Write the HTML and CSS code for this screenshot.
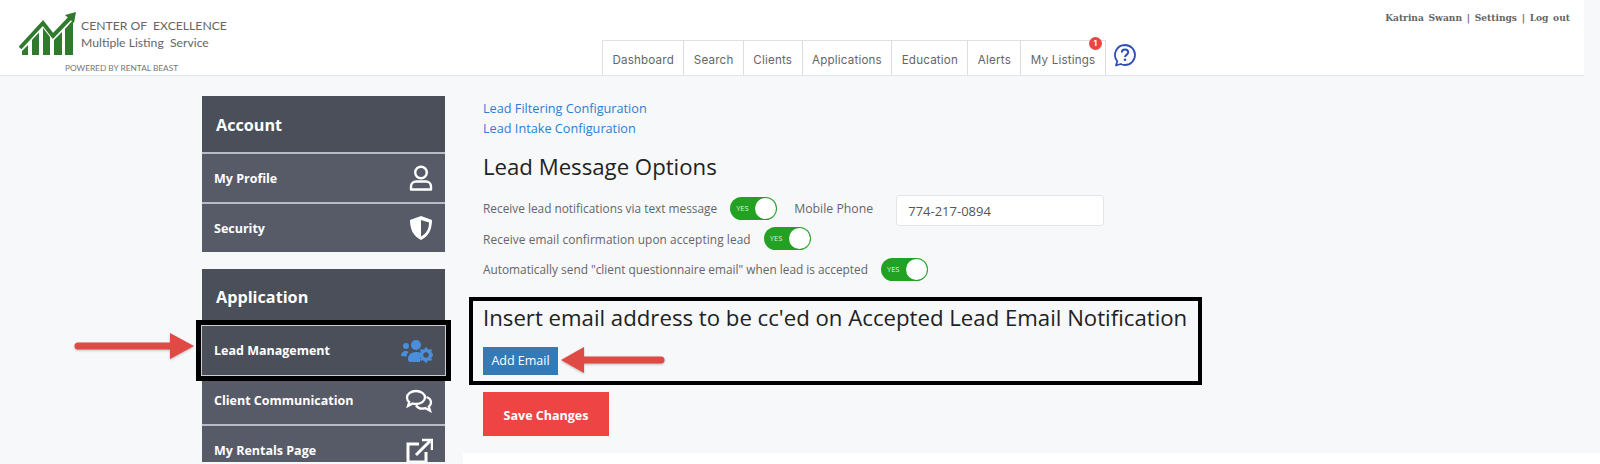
FILE: index.html
```html
<!DOCTYPE html>
<html lang="en">
<head>
  <meta charset="UTF-8">
  <meta name="viewport" content="width=device-width, initial-scale=1.0">
  <title>Lead Management</title>
  <link rel="stylesheet" href="styles.css">
</head>
<body>
  <header class="topbar">
    <div class="brand">
      <svg class="brand-logo" viewBox="0 0 58 44" width="58" height="44">
        <path d="M3 43V39L9 33V43Z M13 43V28L20 20.500V43Z M24 43V16L31 25V43Z M35 43V28L43 20V43Z M46 43V17L54 8V43Z" fill="#2f7a2c"/>
        <path d="M1 36L24 11L34 24L53 4" fill="none" stroke="#2f7a2c" stroke-width="4"/>
        <path d="M46 3L57 0L55 11Z" fill="#2f7a2c"/>
      </svg>
      <div class="brand-text">
        <div class="brand-name">CENTER OF&nbsp; EXCELLENCE</div>
        <div class="brand-sub">Multiple Listing&nbsp; Service</div>
        <div class="brand-power">POWERED BY RENTAL BEAST</div>
      </div>
    </div>

    <nav class="tabs">
      <a href="#">Dashboard</a>
      <a href="#">Search</a>
      <a href="#">Clients</a>
      <a href="#">Applications</a>
      <a href="#">Education</a>
      <a href="#">Alerts</a>
      <a href="#" class="tab-badge">My Listings<span class="badge">1</span></a>
    </nav>
    <svg class="help" viewBox="0 0 24 24" width="24" height="24">
      <path d="M12 2a10 10 0 0 1 0 20c-1.600 0-3-.3-4.300-1L3 22.500l1.300-4.200A10 10 0 0 1 12 2Z" fill="none" stroke="#2f4fb5" stroke-width="1.800" stroke-linejoin="round"/>
      <path d="M8.800 9.500c0-1.900 1.400-3 3.200-3s3.200 1.100 3.200 2.800c0 2.500-3.200 2.500-3.200 4.700" fill="none" stroke="#2f4fb5" stroke-width="2"/>
      <circle cx="12" cy="16.800" r="1.300" fill="#2f4fb5"/>
    </svg>

    <div class="user-links">Katrina Swann | Settings | Log out</div>
  </header>

  <div class="page">
    <aside class="sidebar">
      <section class="side-group">
        <h2>Account</h2>
        <a href="#" class="side-item">My Profile
          <svg viewBox="0 0 24 26" width="24" height="26" fill="none" stroke="#fff" stroke-width="2.400">
            <circle cx="12" cy="7.500" r="5.800"/>
            <path d="M2 24.500V21.500C2 18.500 4.500 16.500 7 16.500H17C19.500 16.500 22 18.500 22 21.500V24.500Z" stroke-linejoin="round"/>
          </svg>
        </a>
        <a href="#" class="side-item">Security
          <svg viewBox="0 0 24 26" width="24" height="26">
            <path d="M12 1L23 5C23 14 20 21 12 25C4 21 1 14 1 5Z" fill="#fff"/>
            <path d="M12 5L20 7.500C20 14 17.500 18.500 12 21.500Z" fill="#565b67"/>
          </svg>
        </a>
      </section>

      <section class="side-group">
        <h2 class="side-head-tight">Application</h2>
        <a href="#" class="side-item side-active">Lead Management
          <svg viewBox="0 0 32 24" width="32" height="24" fill="#4a8fdc">
            <circle cx="5" cy="7" r="3"/>
            <circle cx="15" cy="6" r="5"/>
            <path d="M0 17c0-3 2-5 5-5 1 0 2 .3 2.500 1-1 1-2 3-2 4.500Z"/>
            <path d="M7 20c0-4 3-7 8-7 2 0 3 .4 4 1v9H9c-1 0-2-1-2-3Z"/>
            <circle cx="25" cy="16" r="4.500" fill="none" stroke="#4a8fdc" stroke-width="3.500"/>
            <path d="M25 8.500v3M25 20.500v3M17.500 16h3M29.500 16h3M19.700 10.700l2 2M28.300 19.300l2 2M30.300 10.700l-2 2M21.700 19.300l-2 2" stroke="#4a8fdc" stroke-width="2.500"/>
          </svg>
        </a>
        <a href="#" class="side-item side-after-active">Client Communication
          <svg viewBox="0 0 28 24" width="28" height="24" fill="none" stroke="#fff" stroke-width="2.300">
            <path d="M11 2c5 0 9 3 9 6.500S16 15 11 15c-1.200 0-2.300-.2-3.300-.5L3 17l1.200-4C2.800 12 2 10.300 2 8.500 2 5 6 2 11 2Z"/>
            <path d="M21.500 8c2.700 1 4.500 3 4.500 5.500 0 1.700-.8 3-2.200 4.200l1.200 4-4.500-2.500c-3.500 1-7.500 0-9.500-2.700"/>
          </svg>
        </a>
        <a href="#" class="side-item side-last">My Rentals Page
          <svg viewBox="0 0 28 26" width="28" height="26" fill="none" stroke="#fff" stroke-width="3">
            <path d="M14 6H3V24H21V14"/>
            <path d="M11 17L25 3"/>
            <path d="M17 2H27V12" stroke-width="2.500"/>
          </svg>
        </a>
      </section>
    </aside>

    <div class="content-wrap">
      <main class="content">
        <div class="config-links">
          <a href="#">Lead Filtering Configuration</a>
          <a href="#">Lead Intake Configuration</a>
        </div>

        <h1>Lead Message Options</h1>

        <div class="option">
          <span>Receive lead notifications via text message</span>
          <span class="switch"><small>YES</small></span>
          <span class="phone-label">Mobile Phone</span>
          <input class="phone-input" type="text" value="774-217-0894">
        </div>
        <div class="option option-wide">
          <span>Receive email confirmation upon accepting lead</span>
          <span class="switch"><small>YES</small></span>
        </div>
        <div class="option">
          <span>Automatically send "client questionnaire email" when lead is accepted</span>
          <span class="switch"><small>YES</small></span>
        </div>

        <div class="cc-box">
          <div class="cc-title">Insert email address to be cc'ed on Accepted Lead Email Notification</div>
          <button class="btn-add">Add Email</button>
        </div>

        <button class="btn-save">Save Changes</button>
      </main>
    </div>
  </div>

  <!-- red callout arrows drawn on top of the screenshot -->
  <svg class="arrow arrow-side" viewBox="0 0 122 28" width="122" height="28">
    <path d="M4 14H100" stroke="#e04a45" stroke-width="7" stroke-linecap="round"/>
    <path d="M96 1L120 14L96 27Z" fill="#e04a45"/>
  </svg>
  <svg class="arrow arrow-add" viewBox="0 0 106 28" width="106" height="28">
    <path d="M22 14H101" stroke="#e04a45" stroke-width="7" stroke-linecap="round"/>
    <path d="M24 1L1 14L24 27Z" fill="#e04a45"/>
  </svg>
</body>
</html>
```

FILE: styles.css
```css
html, body {
  margin: 0;
  padding: 0;
}

body {
  position: relative;
  width: 1600px;
  height: 464px;
  overflow: hidden;
  background: #f7f8fa;
  font-family: "Open Sans", sans-serif;
}

.topbar {
  position: relative;
  display: flex;
  align-items: flex-end;
  width: 1584px;
  height: 75px;
  border-bottom: 1px solid #e4e5e8;
  background: #fff;
}

.brand {
  display: flex;
  align-items: flex-start;
  width: 602px;
  height: 75px;
  padding: 12px 0 0 19px;
  box-sizing: border-box;
}

.brand-logo {
  flex: none;
  margin-right: 4px;
}

.brand-text {
  font-family: Lato, sans-serif;
  color: #666;
}

.brand-name {
  margin-top: 5px;
  font-size: 12.2px;
  line-height: 17px;
}

.brand-sub {
  font-size: 12.2px;
  line-height: 17px;
}

.brand-power {
  margin: 12px 0 0 -16px;
  font-size: 8.3px;
  line-height: 10px;
  color: #777;
}

.tabs {
  display: flex;
  height: 34px;
  border-top: 1px solid #e0e0e0;
  border-left: 1px solid #e0e0e0;
}

.tabs a {
  display: flex;
  align-items: center;
  padding: 3px 9.4px 0;
  border-right: 1px solid #ddd;
  font-family: Inter, sans-serif;
  font-size: 11.6px;
  letter-spacing: 0.2px;
  color: #666;
  text-decoration: none;
}

.tab-badge {
  position: relative;
}

.badge {
  position: absolute;
  top: -4px;
  right: 3px;
  width: 13px;
  height: 13px;
  border-radius: 50%;
  background: #ef4444;
  color: #fff;
  font-size: 8px;
  font-weight: 700;
  line-height: 13px;
  text-align: center;
  letter-spacing: 0;
}

.help {
  margin: 0 0 8px 7px;
}

.user-links {
  position: absolute;
  top: 12px;
  right: 14px;
  font-family: "DejaVu Serif", serif;
  font-size: 9.1px;
  font-weight: 700;
  word-spacing: 1.5px;
  color: #666;
}

.page {
  display: flex;
  padding-left: 202px;
  height: 388px;
}

.sidebar {
  flex: none;
  width: 243px;
  margin-right: 18px;
  padding-top: 20px;
}

.side-group {
  margin-bottom: 17px;
}

.side-group h2 {
  margin: 0;
  height: 56px;
  padding-left: 14px;
  background: #4a4f5a;
  color: #fff;
  font-size: 16.2px;
  font-weight: 700;
  line-height: 58px;
}

.side-group .side-head-tight {
  line-height: 56px;
}

.side-item {
  display: flex;
  justify-content: space-between;
  align-items: center;
  height: 48px;
  padding: 0 12px;
  background: #565b67;
  border-top: 2px solid #b9bcc4;
  color: #fff;
  font-size: 12.5px;
  font-weight: 700;
  text-decoration: none;
}

.side-active {
  position: relative;
  z-index: 1;
  height: 49px;
  margin-top: 1px;
  border-top: 0;
  background: #4a4f5a;
  box-shadow: 0 0 0 1px #c9ccd2, 0 0 0 6px #000;
}

.side-after-active {
  height: 47px;
  padding-top: 2px;
  border-top: 0;
}

.side-last {
  align-items: flex-start;
  height: 24px;
  padding-top: 12px;
  line-height: 26px;
  overflow: hidden;
}

.content-wrap {
  flex: 1;
  background: #fff;
}

.content {
  height: 377px;
  box-sizing: border-box;
  padding: 22px 0 0 20px;
  background: #f7f8fa;
}

.config-links a {
  display: block;
  font-size: 12.7px;
  line-height: 20px;
  color: #2a7fd8;
  text-decoration: none;
}

h1 {
  margin: 14px 0 11px;
  font-size: 22.2px;
  font-weight: 400;
  line-height: 30px;
  color: #222;
}

.option {
  display: flex;
  align-items: center;
  height: 30.5px;
  font-size: 11.85px;
  color: #666;
}

.option-wide {
  letter-spacing: 0.09px;
}

.switch {
  position: relative;
  flex: none;
  width: 47px;
  height: 23px;
  margin-left: 13px;
  border-radius: 12px;
  background: #22a122;
}

.switch::after {
  content: "";
  position: absolute;
  top: 1px;
  right: 1px;
  width: 21px;
  height: 21px;
  border-radius: 50%;
  background: #fff;
}

.switch small {
  position: absolute;
  top: 0;
  left: 6px;
  color: #dff3df;
  font-size: 7.5px;
  line-height: 23px;
}

.phone-label {
  margin-left: 17px;
  font-size: 12.3px;
}

.phone-input {
  width: 208px;
  height: 31px;
  box-sizing: border-box;
  margin: 5px 0 0 23px;
  padding: 0 11px;
  border: 1px solid #e4e5e8;
  border-radius: 3px;
  background: #fff;
  font-family: "Open Sans", sans-serif;
  font-size: 13px;
  color: #555;
}

.cc-box {
  width: 733px;
  height: 88px;
  box-sizing: border-box;
  margin: 12px 0 0 -14px;
  padding: 1px 10px;
  border: 4px solid #000;
}

.cc-title {
  font-size: 22.2px;
  line-height: 31px;
  color: #222;
}

.btn-add {
  display: block;
  width: 75px;
  height: 28px;
  margin-top: 14px;
  border: 0;
  background: #337ab7;
  color: #fff;
  font-family: "Open Sans", sans-serif;
  font-size: 12.5px;
}

.btn-save {
  display: block;
  width: 126px;
  height: 44px;
  margin-top: 7px;
  padding-top: 4px;
  border: 0;
  background: #ef4444;
  color: #fff;
  font-family: "Open Sans", sans-serif;
  font-size: 12.5px;
  font-weight: 700;
}

.arrow {
  position: absolute;
  filter: drop-shadow(0 1px 1px rgba(0, 0, 0, 0.25));
}

.arrow-side {
  left: 74px;
  top: 332px;
}

.arrow-add {
  left: 560px;
  top: 346px;
}
```
